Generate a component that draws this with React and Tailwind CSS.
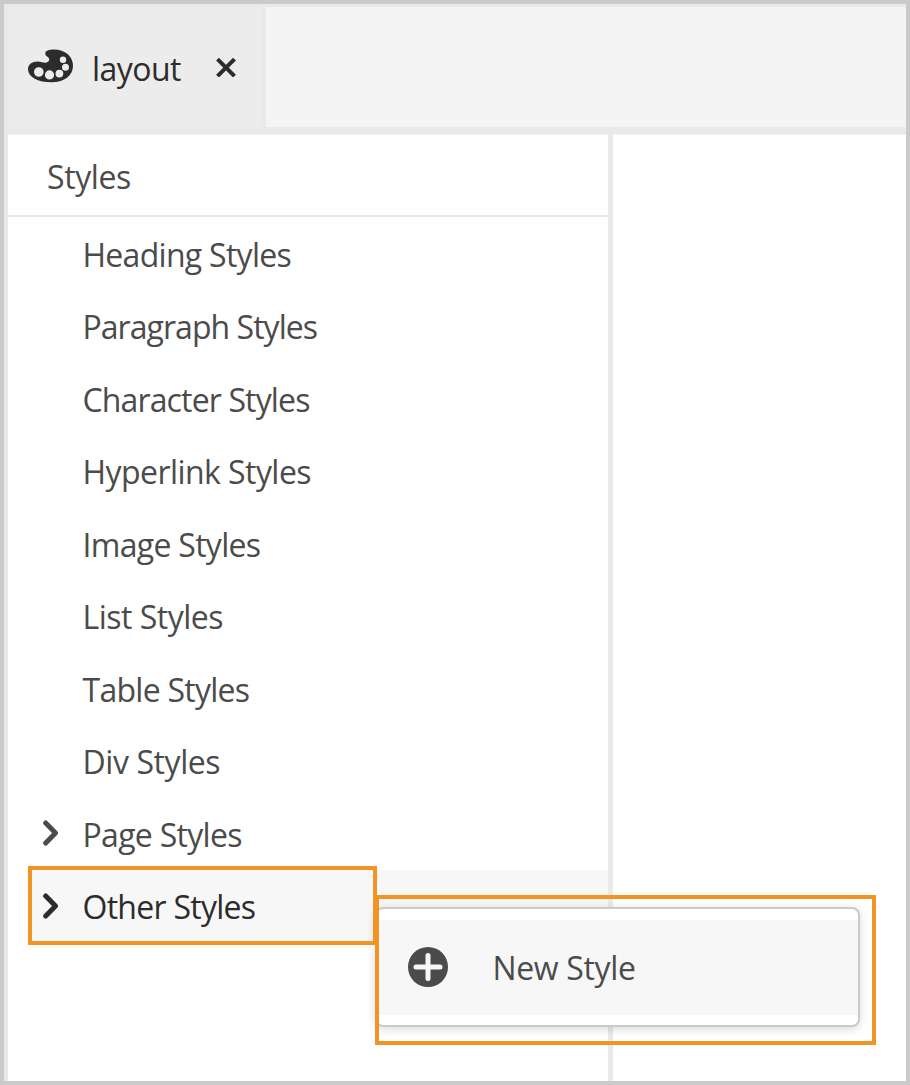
const styleGroups = [
  { label: "Heading Styles", tracking: "tracking-[-0.72px]" },
  { label: "Paragraph Styles", tracking: "tracking-[-0.96px]" },
  { label: "Character Styles", tracking: "tracking-[-0.86px]" },
  { label: "Hyperlink Styles", tracking: "tracking-[-0.56px]" },
  { label: "Image Styles", tracking: "tracking-[-0.7px]" },
  { label: "List Styles", tracking: "tracking-[-0.5px]" },
  { label: "Table Styles", tracking: "tracking-[-0.73px]" },
  { label: "Div Styles", tracking: "tracking-[-0.42px]" },
  { label: "Page Styles", tracking: "tracking-[-0.7px]", expandable: true },
  { label: "Other Styles", tracking: "tracking-[-0.73px]", expandable: true, selected: true },
];

function PaletteIcon() {
  return (
    <svg className="mb-[3px] h-[34px] w-[46px] shrink-0" viewBox="0 0 46 34">
      <path
        fill="#2c2c2c"
        fillRule="evenodd"
        d="M17.300 4.500C17.300 1.500 21.200 0.500 26 0.500C37 0.500 45 7.300 45 16.800C45 27.300 35.500 33.300 23.500 33.300C10 33.300 0 28 0 20.200C0 15.200 4 12.400 9.500 12.400C13.500 12.400 15.800 14.300 18.500 13.500C21.800 12.500 22 9.500 19.800 8C18.200 7 17.300 6 17.300 4.500Z
        M31.800 10.700a3.200 3.200 0 1 0 6.400 0a3.200 3.200 0 1 0 -6.400 0Z
        M34 18.200a3.500 3.500 0 1 0 7 0a3.500 3.500 0 1 0 -7 0Z
        M27.500 24.600a3.900 3.900 0 1 0 7.800 0a3.900 3.900 0 1 0 -7.800 0Z
        M16.900 25.900a4.600 4.600 0 1 0 9.200 0a4.600 4.600 0 1 0 -9.200 0Z
        M6 23a4.800 4.800 0 1 0 9.600 0a4.800 4.800 0 1 0 -9.600 0Z"
      />
    </svg>
  );
}

function CloseIcon() {
  return (
    <svg className="h-5 w-5 shrink-0" viewBox="0 0 20 20" stroke="#2c2c2c" strokeWidth="4" strokeLinecap="butt">
      <path d="M1.500 2.100L18.500 19.100M18.500 2.100L1.500 19.100" />
    </svg>
  );
}

function Chevron() {
  return (
    <svg className="h-[26px] w-4 shrink-0" viewBox="0 0 16 26" fill="none" stroke="currentColor" strokeWidth="5" strokeLinecap="round" strokeLinejoin="round">
      <path d="M2.700 3L12.500 13L2.700 23" />
    </svg>
  );
}

function StyleRow({ group }) {
  return (
    <li className={`ml-[21px] flex h-[72.5px] items-center pl-[13.5px] ${group.selected ? "bg-[#f7f7f7] text-[#2c2c2c]" : ""}`}>
      <span className="flex w-10 shrink-0">{group.expandable && <Chevron />}</span>
      <span className={`whitespace-nowrap pt-[3px] ${group.tracking}`}>{group.label}</span>
    </li>
  );
}

export default function App() {
  return (
    <div className="relative flex h-[1085px] w-[910px] flex-col overflow-hidden border-4 border-[#cacaca] bg-white font-['Open_Sans',sans-serif] text-[32px] leading-[44px] text-[#4b4b4b]">
      <header className="flex h-[130px] shrink-0 border-t-3 border-b-7 border-l-4 border-[#e9e9e9] bg-[#f4f4f4]">
        <div className="flex w-[258px] shrink-0 items-center border-r-5 border-[#e9e9e9] bg-[#ececec] pl-5 text-[#2c2c2c]">
          <PaletteIcon />
          <span className="ml-[18px] w-[124px] pt-[3px] tracking-[-0.55px]">layout</span>
          <CloseIcon />
        </div>
      </header>
      <main className="flex min-h-0 flex-1 border-l-4 border-[#e9e9e9]">
        <section className="w-[605px] shrink-0 border-r-5 border-[#e9e9e9]">
          <h2 className="h-[83px] border-t border-b-2 border-t-[#f4f4f4] border-b-[#e9e9e9] pt-5 pl-[39px] tracking-[-0.4px]">Styles</h2>
          <ul>
            {styleGroups.map((group) => (
              <StyleRow key={group.label} group={group} />
            ))}
          </ul>
        </section>
        <section className="flex-1 border-t border-[#f4f4f4]" />
      </main>

      <div className="absolute top-[903px] left-[371px] h-[120px] w-[485px] rounded-lg border-2 border-[#cacaca] bg-white py-[11px] shadow-[0_2px_10px_rgba(0,0,0,0.15)]">
        <button className="flex h-[95px] w-full items-center bg-[#f7f7f7] pl-[31px]">
          <svg className="mb-px h-10 w-10 shrink-0" viewBox="0 0 40 40">
            <circle cx="20" cy="20" r="20" fill="#4b4b4b" />
            <path d="M20 8.500V31.500M8 20H32" stroke="#f7f7f7" strokeWidth="5" strokeLinecap="round" />
          </svg>
          <span className="ml-[44.5px] whitespace-nowrap pt-px tracking-[-0.35px]">New Style</span>
        </button>
      </div>
      <div className="pointer-events-none absolute top-[862px] left-6 h-[79px] w-[349px] border-4 border-[#f29423]" />
      <div className="pointer-events-none absolute top-[891px] left-[371px] h-[150px] w-[501px] border-4 border-[#f29423]" />
    </div>
  );
}
